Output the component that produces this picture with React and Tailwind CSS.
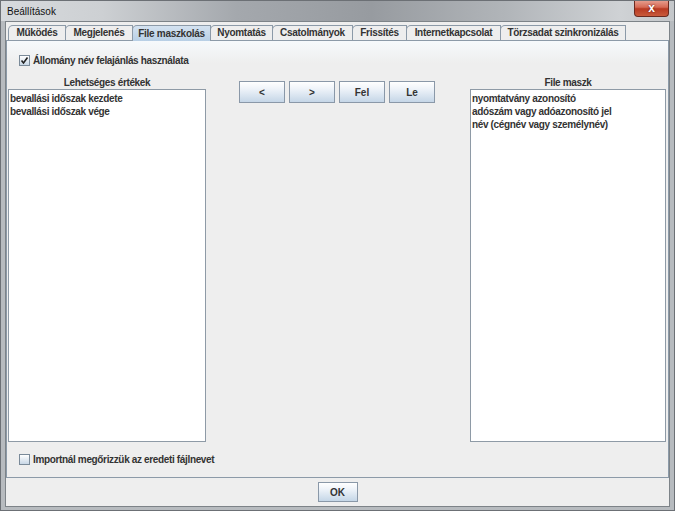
import React from "react";

const font = { fontFamily: '"Liberation Sans", Arial, sans-serif' };

function Tab({ label, selected, w }) {
  return (
    <div
      className={
        "relative h-[15px] flex items-center justify-center border-t border-r border-l border-[#8c9aa8] rounded-tl-[5px] -mr-px text-[10px] font-bold leading-none tracking-[-0.3px] text-[#333333] " +
        (selected
          ? "bg-[linear-gradient(#d4e2f0,#b8cfe5)] z-10 h-[16px] -mb-px"
          : "bg-[#eeeeee]")
      }
      style={{ width: w }}
    >
      {label}
    </div>
  );
}

function Check({ checked }) {
  return (
    <div className="w-[11px] h-[11px] border border-[#7a8a99] bg-[linear-gradient(#ffffff,#c8d7e6)] flex items-center justify-center">
      {checked && (
        <svg width="9" height="9" viewBox="0 0 9 9">
          <path d="M1.5 4.5 L3.5 7 L7.5 1.5" stroke="#222" strokeWidth="1.6" fill="none" />
        </svg>
      )}
    </div>
  );
}

function Btn({ children, w = 46, h = 22 }) {
  return (
    <div
      className="flex items-center justify-center border border-[#8a98a8] bg-[linear-gradient(#ffffff_0%,#eef3f9_35%,#c5d6e7_100%)] text-[10px] font-bold text-[#333333]"
      style={{ width: w, height: h }}
    >
      {children}
    </div>
  );
}

export default function App() {
  const tabs = [
    ["Működés", 58],
    ["Megjelenés", 68],
    ["File maszkolás", 79],
    ["Nyomtatás", 63],
    ["Csatolmányok", 81],
    ["Frissítés", 55],
    ["Internetkapcsolat", 95],
    ["Törzsadat szinkronizálás", 126],
  ];
  return (
    <div
      className="w-[675px] h-[511px] flex flex-col overflow-hidden bg-[#b7bbbf] border border-[#6c7075]"
      style={font}
    >
      {/* title bar */}
      <div className="h-[20px] shrink-0 flex items-start justify-between bg-[linear-gradient(90deg,#d7dadd_0%,#cdd0d3_15%,#a4a8ad_35%,#979ba0_55%,#b1b5b9_75%,#cfd2d5_92%,#c4c7ca_100%)]">
        <div className="pl-[6px] pt-[5px] text-[10px] leading-[12px] text-[#111111]">Beállítások</div>
        <div className="mr-[5px] w-[35px] h-[17px] -mt-px rounded-b-[4px] border border-t-0 border-[#6b2a20] bg-[linear-gradient(#e8a394_0%,#d66a55_45%,#b83a22_55%,#c95a3c_100%)] flex items-center justify-center">
          <span className="text-white text-[12px] font-bold leading-none [text-shadow:0_0_2px_#5a1208]">x</span>
        </div>
      </div>
      {/* body */}
      <div className="flex-1 mx-[4px] mb-[3px] border border-[#7d8388] bg-[#eeeeee] flex flex-col">
        <div className="pt-[3px] pl-[2px] flex items-end">
          {tabs.map(([l, w]) => (
            <Tab key={l} label={l} w={w} selected={l === "File maszkolás"} />
          ))}
        </div>
        <div className="h-[438px] border border-[#8c9aa8] bg-[linear-gradient(#f6f9fc_0px,#eeeeee_22px)] flex flex-col">
          <div className="pt-[14px] pl-[12px] flex items-center gap-[3px] h-[25px]">
            <Check checked />
            <span className="text-[10px] font-bold text-[#333333] leading-none tracking-[-0.35px]">Állomány név felajánlás használata</span>
          </div>
          <div className="mt-[11px] flex flex-1 pl-[1px]">
            <div className="w-[198px] flex flex-col">
              <div className="h-[12px] text-center text-[10px] font-bold text-[#333333] leading-[12px] tracking-[-0.35px]">Lehetséges értékek</div>
              <div className="flex-1 bg-white border border-[#8e9aa6] pt-[2px] pl-px text-[10px] font-bold text-[#333333] leading-[13px] tracking-[-0.35px]">
                <div>bevallási időszak kezdete</div>
                <div>bevallási időszak vége</div>
              </div>
            </div>
            <div className="ml-[33px] mt-[4px] flex gap-[4px] items-start">
              <Btn>&lt;</Btn>
              <Btn>&gt;</Btn>
              <Btn>Fel</Btn>
              <Btn>Le</Btn>
            </div>
            <div className="ml-[35px] w-[196px] flex flex-col">
              <div className="h-[12px] text-center text-[10px] font-bold text-[#333333] leading-[12px] tracking-[-0.35px]">File maszk</div>
              <div className="flex-1 bg-white border border-[#8e9aa6] pt-[2px] pl-px text-[10px] font-bold text-[#333333] leading-[13px] tracking-[-0.35px]">
                <div>nyomtatvány azonosító</div>
                <div>adószám vagy adóazonosító jel</div>
                <div>név (cégnév vagy személynév)</div>
              </div>
            </div>
          </div>
          <div className="pt-[12px] pb-[12px] pl-[12px] flex items-center gap-[3px]">
            <Check />
            <span className="text-[10px] font-bold text-[#333333] leading-none tracking-[-0.35px]">Importnál megőrizzük az eredeti fájlnevet</span>
          </div>
        </div>
        <div className="flex-1 flex items-center justify-center">
          <Btn w={40} h={20}>OK</Btn>
        </div>
      </div>
    </div>
  );
}
